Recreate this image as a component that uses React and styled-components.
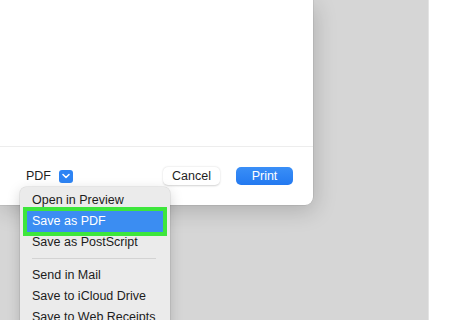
import React from 'react';
import styled, {createGlobalStyle} from 'styled-components';

const GlobalStyle = createGlobalStyle`
  html, body {
    margin: 0;
    padding: 0;
    background: #ffffff;
    font-family: "Liberation Sans", Arial, sans-serif;
  }
`;

const Screen = styled.div`
  display: flex;
  width: 460px;
  height: 320px;
  overflow: hidden;
`;

const Desktop = styled.div`
  position: relative;
  width: 428px;
  height: 320px;
  background: #d6d6d6;
  border-right: 1px solid #e4e4e4;
`;

const Dialog = styled.div`
  display: flex;
  flex-direction: column;
  width: 313px;
  height: 205px;
  background: #ffffff;
  border-bottom-right-radius: 8px;
  box-shadow: 2px 6px 22px rgba(0, 0, 0, 0.18), 0 0 0 0.5px rgba(0, 0, 0, 0.12);
`;

const Preview = styled.div`
  flex: 1;
  border-bottom: 1px solid #ededed;
`;

const Footer = styled.div`
  display: flex;
  align-items: center;
  height: 58px;
  padding: 0 20px 0 26px;
  gap: 16px;
`;

const PdfPicker = styled.div`
  position: relative;
  display: flex;
  align-items: center;
  gap: 8px;
  margin-right: auto;
  font-size: 12.5px;
  color: #1e1e1e;
`;

const Chevron = styled.span`
  display: flex;
  align-items: center;
  justify-content: center;
  width: 14px;
  height: 13px;
  border-radius: 3px;
  background: #2d84f4;
`;

const Button = styled.button`
  width: 57px;
  height: 18px;
  border: none;
  border-radius: 5px;
  padding: 0;
  font-family: inherit;
  font-size: 12.5px;
  line-height: 18px;
  color: ${p => (p.$primary ? '#ffffff' : '#1e1e1e')};
  background: ${p => (p.$primary ? 'linear-gradient(#3a8ff7, #2379f0)' : '#ffffff')};
  box-shadow: ${p => (p.$primary ? 'none' : '0 0.5px 2px rgba(0, 0, 0, 0.18)')};
`;

const Menu = styled.div`
  position: absolute;
  left: 20px;
  top: 187px;
  width: 150px;
  padding: 3px 0 6px;
  background: #ebebeb;
  border-radius: 6px;
  box-shadow: 0 4px 14px rgba(0, 0, 0, 0.18), 0 0 0 0.5px rgba(0, 0, 0, 0.12);
  font-size: 12.5px;
  color: #1c1c1c;
`;

const Item = styled.div`
  height: 21px;
  line-height: 21px;
  margin: 0 7px;
  padding: 0 5px;
  white-space: nowrap;
  color: ${p => (p.$active ? '#ffffff' : '#1c1c1c')};
  background: ${p => (p.$active ? '#3b8df2' : 'transparent')};
  outline: ${p => (p.$active ? '4px solid #3de63c' : 'none')};
`;

const Divider = styled.div`
  height: 1px;
  margin: 5px 14px 6px 12px;
  background: #d3d3d3;
`;

const items = [
  'Open in Preview',
  'Save as PDF',
  'Save as PostScript',
  null,
  'Send in Mail',
  'Save to iCloud Drive',
  'Save to Web Receipts',
];

const App = () => {
  return (
    <Screen>
      <GlobalStyle/>
      <Desktop>
        <Dialog>
          <Preview/>
          <Footer>
            <PdfPicker>
              PDF
              <Chevron>
                <svg width="8" height="6" viewBox="0 0 8 6">
                  <path d="M1 1.5 L4 4.5 L7 1.5" fill="none" stroke="#ffffff" strokeWidth="1.5" strokeLinecap="round" strokeLinejoin="round"/>
                </svg>
              </Chevron>
            </PdfPicker>
            <Button>Cancel</Button>
            <Button $primary>Print</Button>
          </Footer>
        </Dialog>
        <Menu>
          {items.map((label, i) =>
            label ?
              <Item key={i} $active={label === 'Save as PDF'}>{label}</Item>
              :
              <Divider key={i}/>
          )}
        </Menu>
      </Desktop>
    </Screen>
  );
};

export default App;
